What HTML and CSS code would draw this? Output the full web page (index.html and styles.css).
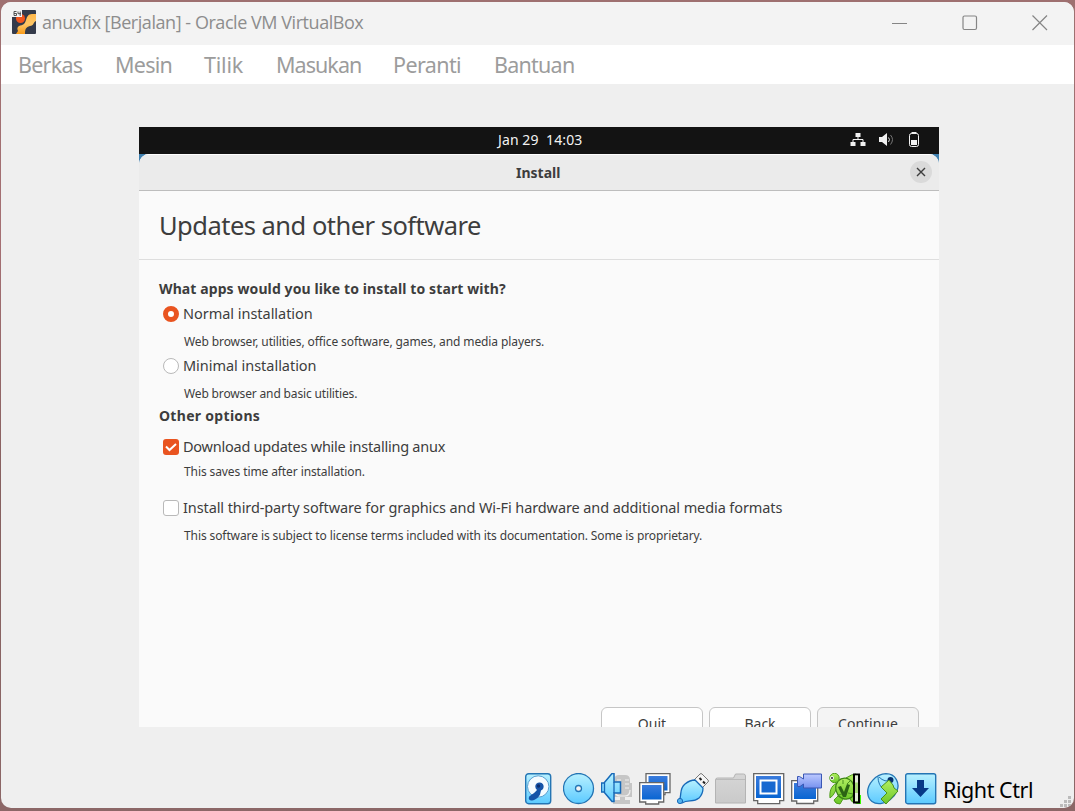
FILE: index.html
```html
<!DOCTYPE html>
<html lang="id">
<head>
<meta charset="utf-8">
<title>anuxfix [Berjalan] - Oracle VM VirtualBox</title>
<link rel="stylesheet" href="styles.css">
</head>
<body>
<div class="window">
  <header class="titlebar">
    <svg class="app-icon" viewBox="0 0 24 24"><defs><linearGradient id="or" x1="0" y1="0" x2="0" y2="1"><stop offset="0" stop-color="#ffb84a"/><stop offset=".5" stop-color="#ffc766"/><stop offset="1" stop-color="#f89a18"/></linearGradient></defs><rect width="24" height="24" rx="1" fill="#343a4a"/><path d="M24 4h-4c-4 0-5 3-6 6-1 4-3 5-7 6-2 1-2 3-1 5l-2 3h9c0-5 1-7 5-8 4 0 3-4 6-5z" fill="url(#or)"/><circle cx="8.500" cy="8.500" r="4.500" fill="#f1541d"/><path d="M0 0h10v7H0z" fill="#f4f4f4"/><path d="M4.500 1.500H2v4h2.500v-2H2M6 1.500v2.200h3M8.200 1.500v4.500" fill="none" stroke="#444" stroke-width=".9"/></svg>
    <h1 class="title">anuxfix [Berjalan] - Oracle VM VirtualBox</h1>
    <div class="controls">
      <svg viewBox="0 0 16 16"><path d="M0 8.500h15" /></svg>
      <svg viewBox="0 0 16 16"><rect x="1" y="1" width="13.500" height="13.500" rx="1.500"/></svg>
      <svg viewBox="0 0 16 16"><path d="M.5.5l14.500 14.500M15 .5L.5 15"/></svg>
    </div>
  </header>
  <nav class="menubar"><span class="m1">Berkas</span><span class="m2">Mesin</span><span class="m3">Tilik</span><span class="m4">Masukan</span><span class="m5">Peranti</span><span class="m6">Bantuan</span></nav>
  <main class="guest">
    <div class="topbar">
      <span class="clock">Jan 29&nbsp; 14:03</span>
      <div class="tray">
        <svg viewBox="0 0 16 16"><path d="M5.500 1h5v4h-5zM.5 10h5v4h-5zM10.500 10h5v4h-5z" fill="#f2f2f2"/><path d="M8 5v2.500M3 10V7.500h10V10" fill="none" stroke="#f2f2f2"/></svg>
        <svg viewBox="0 0 16 16"><path d="M1 5h3l5-4v13l-5-4H1z" fill="#f2f2f2"/><path d="M10.500 5.500q2 2 0 4.500" fill="none" stroke="#ddd"/><path d="M12.500 3q4 4.500 0 9.500" fill="none" stroke="#777"/></svg>
        <svg viewBox="0 0 16 16"><path d="M5.500 0h5v2h-5z" fill="#f2f2f2"/><rect x="3.500" y="1.500" width="9" height="13" rx="2" fill="none" stroke="#f2f2f2"/><path d="M5 8h6v5H5z" fill="#f2f2f2"/></svg>
      </div>
    </div>
    <div class="desktop">
      <section class="installer">
        <div class="headerbar"><span class="install">Install</span><span class="close"><svg viewBox="0 0 10 10"><path d="M1 1l8 8M9 1L1 9"/></svg></span></div>
        <h2 class="heading"><span>Updates and other software</span></h2>
        <div class="options">
          <p class="strong s1">What apps would you like to install to start with?</p>
          <p class="choice c1"><i class="radio on"></i><span>Normal installation</span></p>
          <p class="note n1">Web browser, utilities, office software, games, and media players.</p>
          <p class="choice c2"><i class="radio"></i><span>Minimal installation</span></p>
          <p class="note n2">Web browser and basic utilities.</p>
          <p class="strong s2">Other options</p>
          <p class="choice c3"><i class="check on"><svg viewBox="0 0 16 16"><path d="M3 7.500l3.500 3.500L13 5"/></svg></i><span>Download updates while installing anux</span></p>
          <p class="note n3">This saves time after installation.</p>
          <p class="choice c4"><i class="check"></i><span>Install third-party software for graphics and Wi-Fi hardware and additional media formats</span></p>
          <p class="note n4">This software is subject to license terms included with its documentation. Some is proprietary.</p>
        </div>
        <div class="buttons"><span class="btn">Quit</span><span class="btn">Back</span><span class="btn next">Continue</span></div>
      </section>
    </div>
  </main>
  <footer class="statusbar">
    <svg viewBox="0 0 32 32"><defs><linearGradient id="cy" x1="0" y1="0" x2="0" y2="1"><stop offset="0" stop-color="#b9f1ff"/><stop offset="1" stop-color="#5ccaff"/></linearGradient><linearGradient id="bl" x1="0" y1="0" x2="0" y2="1"><stop offset="0" stop-color="#3a7bdc"/><stop offset="1" stop-color="#0865d2"/></linearGradient><linearGradient id="gy" x1="0" y1="0" x2="0" y2="1"><stop offset="0" stop-color="#d6d6d6"/><stop offset="1" stop-color="#cacaca"/></linearGradient><linearGradient id="gn" x1="0" y1="0" x2="0" y2="1"><stop offset="0" stop-color="#b2ee62"/><stop offset="1" stop-color="#6cc828"/></linearGradient><linearGradient id="vi" x1="0" y1="0" x2="0" y2="1"><stop offset="0" stop-color="#bcc9ff"/><stop offset="1" stop-color="#7792ef"/></linearGradient></defs>
      <rect x=".7" y=".7" width="25" height="30" rx="3" fill="url(#cy)" stroke="#2475b4" stroke-width="1.400"/><circle cx="13.200" cy="13.500" r="10.700" fill="#f4fbff" stroke="#5a9fd0"/><path d="M4 24c1-2 5-3 8-7a4.200 4.200 0 1 1 4 .5l-1 4c-2 4-6 6-9 6q-3-1-2-3.500z" fill="#1554a8"/><circle cx="13.500" cy="13" r="1.700" fill="#082c70"/></svg>
    <svg viewBox="0 0 32 32"><circle cx="15.500" cy="15.500" r="15" fill="url(#cy)" stroke="#2475b4" stroke-width="1.300"/><circle cx="15.500" cy="15.500" r="3" fill="#f3f3f3" stroke="#2475b4" stroke-width="1.300"/></svg>
    <svg viewBox="0 0 32 32"><path d="M13 6q1-4 5-4h6q5 0 5 5v3h2v14h-7v3h5v4H12v-4h7v-3h-6z" fill="#c6c6c6"/><path d="M20 7h-4M20 11h-4M20 15h-4M24 7h4M24 11h4M24 15h4M14 19q1 4 5 4h5q5 0 5-6" fill="none" stroke="#f0f0f0" stroke-width="1.200"/><path d="M.5 10H3L11 .5h2V9h6.500v11H13v8.500h-2L3 19H.5z" fill="url(#cy)" stroke="#1769b8" stroke-width="1.500"/><path d="M3.500 10v9M13 9v11" stroke="#1769b8" stroke-width="1.300"/></svg>
    <svg viewBox="0 0 32 32"><path d="M7 .7h24v19h-5v2H12v-2H7z" fill="#fff" stroke="#666" stroke-width="1.300"/><path d="M9.500 3h19v14.500h-19z" fill="url(#bl)"/><path d="M.7 9.700h24V29h-5v2h-13v-2h-6z" fill="#fff" stroke="#666" stroke-width="1.300"/><path d="M3 12h19.500v14.500H3z" fill="url(#bl)"/></svg>
    <svg viewBox="0 0 32 32"><path d="M17 7l6-6q1-1 2 0l6 6q1 1 0 2l-6 6z" fill="#f5f5f5" stroke="#777"/><path d="M22.500 5l2 2M26 8.500l2 2" stroke="#222" stroke-width="2"/><path d="M2.500 27C5 21 2 16 8 11q5-4 10-4l8 8q0 6-4 10c-6 5-11 1-17 5z" fill="url(#cy)" stroke="#1769b8" stroke-width="1.300"/><circle cx="3" cy="28" r="2.600" fill="#55b3ed" stroke="#1769b8"/></svg>
    <svg viewBox="0 0 32 32"><path d="M.5 7q0-2 2-2h16l2-4h8q2 0 2 2v27H.5z" fill="url(#gy)" stroke="#b4b4b4"/><path d="M1 6.500h29" stroke="#bbb"/></svg>
    <svg viewBox="0 0 32 32"><path d="M.7.7h30v27h-4v3h-22v-3h-4z" fill="#fff" stroke="#666" stroke-width="1.300"/><path d="M3 3h25v22H3z" fill="url(#bl)"/><path d="M7.500 7.500h16v13h-16z" fill="#1768d0" stroke="#fff" stroke-width="2"/></svg>
    <svg viewBox="0 0 32 32"><path d="M.7 7.700h26V28h-4v2.500h-17V28h-5z" fill="#fff" stroke="#666" stroke-width="1.300"/><path d="M3 10h22v16H3z" fill="url(#bl)"/><path d="M6.500 3.500h2l4 2.500V1h18v14h-18v-4L9 13.500H6.500z" fill="url(#vi)" stroke="#3a57b5"/></svg>
    <svg viewBox="0 0 32 32"><path d="M9 10C4 11 0 16 1 25q3-2 5-6zM17 5q6-4 10-4v8l-5 3zM9 23l-4 4q1 4 6 4l3-5zM22 23l5-2v9q-4 0-6-4z" fill="url(#gn)" stroke="#4f9c1c"/><path d="M9 8c4-4 10-4 14 1 4 6 3 11 0 15-5 4-11 2-14-2-3-5-3-10 0-14z" fill="url(#gn)" stroke="#3c8416" stroke-width="1.300"/><path d="M9 14l3-1 3 6 3-8 3 1-4 12h-3z" fill="#2c6414"/><path d="M14 7v4M21 8l-3 3M9 22l4-1M19 20l5 1" stroke="#4a9020"/><circle cx="5.500" cy="5" r="4.700" fill="url(#gn)" stroke="#4f9c1c"/><circle cx="3" cy="5" r="2" fill="#f4f4f4"/><circle cx="3" cy="5" r=".9" fill="#111"/><path d="M29 22h3v9h-5z" fill="#38f800"/><path d="M25 1.500h5v28h-5z" fill="#a7d878" stroke="#000" stroke-width="2"/><path d="M26 2.500h3v7h-3zM26 20h3v8h-3z" fill="#e4ecda"/></svg>
    <svg viewBox="0 0 32 32"><path d="M.7 20C0 11 9 1 19 .7c10 0 14 10 11 17C24 33 2 36 .7 20z" fill="url(#cy)" stroke="#2475b4" stroke-width="1.300"/><path d="M11 4q0 8 6 13M12 4q6 6 12 3" fill="none" stroke="#2475b4"/><circle cx="23.500" cy="7" r="3" fill="#07316e"/><path d="M14 14l8-7 4 5 1 3 4 3-12 13-5-5 6-6z" fill="url(#gn)" stroke="#4a9020"/></svg>
    <svg viewBox="0 0 32 32"><rect x=".7" y=".7" width="30" height="30" rx="2" fill="url(#cy)" stroke="#2475b4" stroke-width="1.400"/><path d="M12 7h7v8h5l-8.500 9L7 15h5z" fill="#063987"/></svg>
    <span class="hostkey">Right Ctrl</span>
    <svg class="grip" viewBox="0 0 12 12"><path d="M9 1h3v3H9zM5 5h3v3H5zM9 5h3v3H9zM1 9h3v3H1zM5 9h3v3H5zM9 9h3v3H9z" fill="#bbb"/></svg>
  </footer>
</div>
</body>
</html>
```
FILE: styles.css
```css
* { box-sizing: border-box; margin: 0; padding: 0; }
body { width: 1075px; height: 811px; overflow: hidden; padding: 2px 1px 3px; background: linear-gradient(to bottom, #9e7070, #a56f73 30%, #86605f 60%, #8c6767); }
.window { width: 1073px; height: 806px; display: flex; flex-direction: column; border-radius: 10px; overflow: hidden; background: #efefef; }
.titlebar { height: 43px; flex: none; display: flex; align-items: center; padding: 0 26px 0 11px; background: #f3f3f3; }
.app-icon { width: 24px; height: 24px; margin-top: -3px; }
.title { margin: -3px 0 0 6px; font: 400 18px/24px "Open Sans", sans-serif; letter-spacing: -.45px; color: #8d8d8d; white-space: nowrap; }
.controls { margin: -2px 0 0 auto; display: flex; gap: 54px; }
.controls svg { width: 16px; height: 16px; fill: none; stroke: #858585; stroke-width: 1.2; }
.menubar { height: 39px; flex: none; display: flex; align-items: center; padding-left: 17px; background: #fff; color: #9c9c9c; font: 21.5px/28px "Noto Sans", sans-serif; letter-spacing: -.75px; }
.menubar span { white-space: nowrap; padding-top: 1px; }
.m1 { width: 97px; } .m2 { width: 89px; } .m3 { width: 72px; letter-spacing: -.2px; } .m4 { width: 117px; letter-spacing: -.95px; } .m5 { width: 101px; letter-spacing: -.6px; }
.guest { width: 800px; height: 600px; flex: none; margin: 43px 0 0 138px; display: flex; flex-direction: column; overflow: hidden; color: #3d3d3d; font-family: "Noto Sans", sans-serif; }
.topbar { height: 27px; flex: none; display: grid; grid-template-columns: 1fr 84px 1fr; align-items: center; padding-bottom: 1px; background: #131313; color: #f2f2f2; }
.clock { grid-column: 2; padding-left: 1px; font-size: 14px; letter-spacing: .1px; line-height: 24px; white-space: nowrap; }
.tray { display: flex; justify-content: flex-end; gap: 12px; padding-right: 17px; }
.tray svg { width: 16px; height: 16px; }
.desktop { flex: none; background: #3f7fae; }
.installer { width: 800px; height: 600px; border-radius: 10px 10px 0 0; background: #fafafa; overflow: hidden; }
.headerbar { height: 37px; display: grid; grid-template-columns: 1fr 46px 1fr; align-items: center; padding: 0 7px 1px 7px; background: #ebebeb; border-top: 1px solid #fff; border-bottom: 1px solid #bdbdbd; }
.install { grid-column: 2; font-weight: 700; font-size: 14px; line-height: 20px; padding-top: 1px; }
.close { width: 22px; height: 22px; justify-self: end; display: grid; place-items: center; border-radius: 50%; background: #dadada; }
.close svg { width: 10px; height: 10px; stroke: #3d3d3d; stroke-width: 1.4; }
.heading { height: 69px; padding: 16px 20px 0; font-weight: 400; font-size: 25.5px; letter-spacing: -.52px; line-height: 36px; white-space: nowrap; border-bottom: 1px solid #dedede; }
.options { height: 447px; padding: 19px 20px 0; white-space: nowrap; }
.options p { height: 20px; line-height: 20px; }
.strong { font-weight: 700; font-size: 14px; letter-spacing: .1px; }
.s2 { letter-spacing: .3px; }
.choice { display: flex; align-items: center; gap: 4px; padding-left: 4px; font-size: 14.5px; letter-spacing: -.03px; }
.choice span { padding-bottom: 2px; }
.c3 { letter-spacing: -.24px; }
.c4 { letter-spacing: -.1px; }
.note { padding-left: 25px; font-size: 12px; letter-spacing: -.1px; }
.n2 { letter-spacing: -.15px; }
.options .note { line-height: 22px; }
.options .c1, .options .c2 { margin-top: 5px; }
.options .n1, .options .n2, .options .n4 { margin-top: 7px; }
.options .s2 { margin-top: 3px; }
.options .c3 { margin-top: 11px; }
.options .n3 { margin-top: 4px; }
.options .c4 { margin-top: 17px; }
.radio, .check { width: 16px; height: 16px; flex: none; border: 1px solid #b9b9b9; background: #fff; }
.radio { border-radius: 50%; }
.radio.on { border: 5.5px solid #e95420; }
.check { border-radius: 3px; }
.check.on { border: 0; background: #e95420; }
.check svg { display: block; width: 16px; height: 16px; fill: none; stroke: #fff; stroke-width: 2; }
.buttons { display: flex; justify-content: flex-end; gap: 6px; padding-right: 20px; }
.btn { width: 102px; height: 34px; border: 1px solid #c6c6c6; border-radius: 6px; background: #fff; text-align: center; font-size: 14px; line-height: 32px; }
.next { background: #f4f4f4; }
.statusbar { height: 38px; flex: none; margin-top: 42px; display: flex; align-items: flex-start; gap: 6px; padding: 4px 0 0 524px; }
.statusbar svg { width: 32px; height: 32px; flex: none; }
.hostkey { width: 111px; font: 21.5px/32px "Noto Sans", sans-serif; letter-spacing: -.45px; color: #000; white-space: nowrap; padding-top: 1px; }
.statusbar .grip { width: 12px; height: 12px; margin: 22px 0 0 -1px; }
```
